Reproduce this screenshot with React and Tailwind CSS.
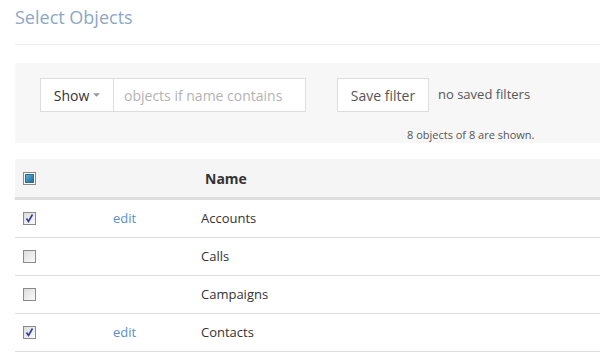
import React from 'react';

const rows = [
  { name: 'Accounts', checked: true },
  { name: 'Calls', checked: false },
  { name: 'Campaigns', checked: false },
  { name: 'Contacts', checked: true },
];

function Checkbox({ state }) {
  if (state === 'header') {
    return (
      <span className="inline-flex h-[13px] w-[13px] items-center justify-center border border-[#8a8a8a] bg-white">
        <span className="h-[9px] w-[9px] bg-gradient-to-br from-[#5bb0d8] to-[#1a6d9c] border border-[#2a6f96]" />
      </span>
    );
  }
  return (
    <span className="relative inline-flex h-[13px] w-[13px] items-center justify-center border border-[#8a8a8a] bg-gradient-to-br from-[#dcdcdc] to-[#fbfbfb]">
      {state === 'checked' && (
        <svg viewBox="0 0 11 11" className="absolute h-[11px] w-[11px]">
          <path d="M2.5 5.5 L4.5 8.5 L8.5 1.5" fill="none" stroke="#2c3f9a" strokeWidth="1.6" />
        </svg>
      )}
    </span>
  );
}

export default function App() {
  return (
    <div className="min-h-screen bg-white pl-[15px] font-['Open_Sans',sans-serif] text-[#333]">
      {/* Header */}
      <div className="h-[45px] border-b border-[#eee] pt-[4px]">
        <h1 className="text-[18px] leading-[26px] text-[#8da7c6]">Select Objects</h1>
      </div>

      {/* Filter panel */}
      <div className="mt-[18px] h-[80px] bg-[#f7f7f7] pl-[25px] pt-[15px]">
        <div className="flex items-center">
          <div className="flex h-[34px] border border-[#ddd] bg-white">
            <button className="flex w-[73px] items-center justify-center gap-[4px] border-r border-[#ddd] text-[14px] text-[#333]">
              Show
              <svg viewBox="0 0 8 4" className="h-[4px] w-[7px]">
                <path d="M0 0 L8 0 L4 4 Z" fill="#999" />
              </svg>
            </button>
            <div className="flex w-[191px] items-center px-[10px] text-[14px] text-[#b3b3b3]">objects if name contains</div>
          </div>
          <button className="ml-[31px] h-[34px] w-[92px] border border-[#ddd] bg-white text-[14px] text-[#555]">Save filter</button>
          <span className="ml-[9px] text-[13px] text-[#555]">no saved filters</span>
        </div>
        <div className="mt-[16px] pl-[367px] text-[11px] leading-[14px] text-[#555]">8 objects of 8 are shown.</div>
      </div>

      {/* Table */}
      <div className="mt-[16px] text-[13px]">
        <div className="flex h-[41px] items-center border-b-[3px] border-[#ddd] bg-[#f5f5f5]">
          <div className="flex w-[98px] pl-[8px]"><Checkbox state="header" /></div>
          <div className="w-[88px]" />
          <div className="pl-[4px] text-[14px] font-bold text-[#333]">Name</div>
        </div>
        {rows.map((r) => (
          <div key={r.name} className="flex h-[38px] items-center border-b border-[#ddd]">
            <div className="flex w-[98px] pl-[8px]"><Checkbox state={r.checked ? 'checked' : 'empty'} /></div>
            <div className="w-[88px] text-[#5b8fc7]">{r.checked ? 'edit' : ''}</div>
            <div className="text-[#333]">{r.name}</div>
          </div>
        ))}
      </div>
    </div>
  );
}
